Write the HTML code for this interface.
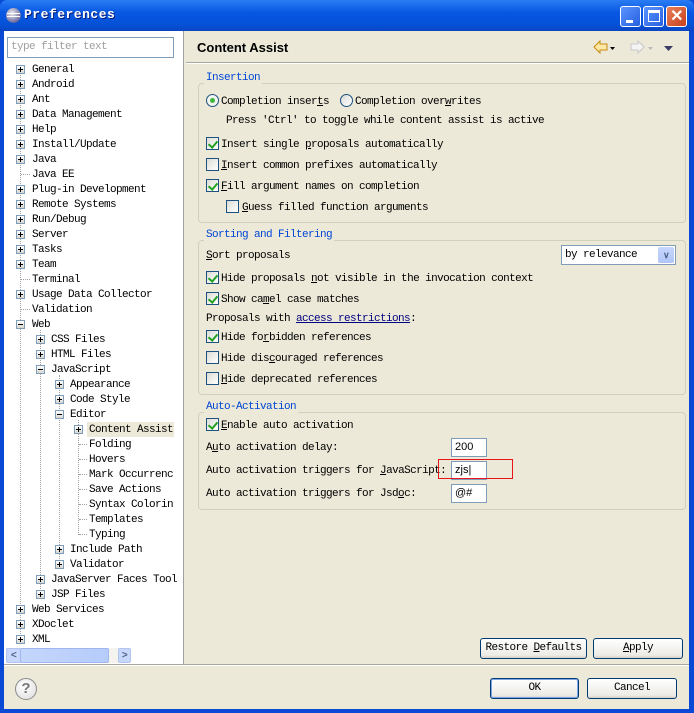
<!DOCTYPE html>
<html><head><meta charset="utf-8"><style>
*{margin:0;padding:0;box-sizing:border-box}
body{width:694px;height:713px;overflow:hidden;background:#0a49d6;font-family:"Liberation Mono",monospace;font-size:11px;letter-spacing:-0.6px;color:#000;position:relative}
.a{position:absolute;white-space:nowrap}
#title{left:0;top:0;width:694px;height:31px;background:linear-gradient(#2a7cf4,#0857e2 40%,#0552d8 80%,#0a45c0);border-radius:7px 7px 0 0}
#client{left:4px;top:31px;width:685px;height:678px;background:#ece9d8}
#tree{left:4px;top:31px;width:180px;height:633px;background:#fff;border-right:1px solid #a0a0a0}
.t{position:absolute;height:15px;line-height:15px;margin-top:1px}
.pb{position:absolute;width:9px;height:9px;border:1px solid #7f9db9;background:linear-gradient(#fff,#d8d8d0)}
.pb:before{content:"";position:absolute;left:1px;top:3px;width:5px;height:1px;background:#000}
.pb.p:after{content:"";position:absolute;left:3px;top:1px;width:1px;height:5px;background:#000}
.vl{position:absolute;border-left:1px dotted #a0a0a0;width:0}
.hl{position:absolute;border-top:1px dotted #a0a0a0;height:0}
.grp{position:absolute;border:1px solid #d0d0bf;border-radius:4px}
.gl{position:absolute;color:#0046d5;background:#ece9d8;padding:0 2px;line-height:13px;margin-top:1px}
.cb{position:absolute;width:13px;height:13px;border:1px solid #1c5180;background:linear-gradient(135deg,#dcdcd6,#fff)}
.cb.c:after{content:"";position:absolute;left:3px;top:1px;width:4px;height:7px;border:solid #21a121;border-width:0 2px 2px 0;transform:rotate(40deg)}
.in{position:absolute;background:#fff;border:1px solid #7f9db9;height:19px;line-height:17px;padding-left:3px;font-family:"Liberation Sans",sans-serif;font-size:11px;letter-spacing:0}
.btn{position:absolute;height:21px;border:1px solid #003c74;border-radius:3px;background:linear-gradient(#fff,#ecebe6 85%,#d6d0c5);text-align:center;line-height:19px}
u{text-decoration:underline}
</style></head><body>
<div id="title" class="a"></div>
<div class="a" style="left:6px;top:8px;width:15px;height:15px;border-radius:50%;background:radial-gradient(circle at 40% 35%,#eee,#6a6aa0 70%,#2a2a60)"></div>
<div class="a" style="left:7px;top:13px;width:13px;height:1px;background:#fff"></div>
<div class="a" style="left:7px;top:16px;width:13px;height:1px;background:#fff"></div>
<div class="a" style="left:24px;top:7px;color:#fff;font-weight:bold;font-size:13px;letter-spacing:0.5px;text-shadow:1px 1px #0a1e78">Preferences</div>
<div class="a" style="left:620px;top:6px;width:21px;height:21px;border:1px solid #fff;border-radius:3px;background:linear-gradient(135deg,#5a94ff,#2660e0)"><div style="position:absolute;left:5px;top:13px;width:7px;height:3px;background:#fff"></div></div>
<div class="a" style="left:643px;top:6px;width:21px;height:21px;border:1px solid #fff;border-radius:3px;background:linear-gradient(135deg,#5a94ff,#2660e0)"><div style="position:absolute;left:4px;top:3px;width:12px;height:12px;border:1px solid #fff;border-top-width:3px"></div></div>
<div class="a" style="left:666px;top:6px;width:21px;height:21px;border:1px solid #fff;border-radius:3px;background:linear-gradient(135deg,#e8805c,#c9401c);color:#fff;font:bold 16px 'Liberation Sans',sans-serif;text-align:center;line-height:19px">✕</div>
<div id="client" class="a"></div>
<div id="tree" class="a"></div>
<div class="a" style="left:7px;top:37px;width:167px;height:21px;border:1px solid #7f9db9;background:#fff;color:#a0a0a0;padding-left:3px;line-height:19px">type filter text</div>

<div class="vl" style="left:20px;top:70px;height:570px"></div>
<div class="vl" style="left:40px;top:330px;height:265px"></div>
<div class="vl" style="left:59px;top:375px;height:190px"></div>
<div class="vl" style="left:78px;top:420px;height:115px"></div>

<div class="pb p" style="left:16px;top:65px"></div><div class="t" style="left:32px;top:62px">General</div>
<div class="pb p" style="left:16px;top:80px"></div><div class="t" style="left:32px;top:77px">Android</div>
<div class="pb p" style="left:16px;top:95px"></div><div class="t" style="left:32px;top:92px">Ant</div>
<div class="pb p" style="left:16px;top:110px"></div><div class="t" style="left:32px;top:107px">Data Management</div>
<div class="pb p" style="left:16px;top:125px"></div><div class="t" style="left:32px;top:122px">Help</div>
<div class="pb p" style="left:16px;top:140px"></div><div class="t" style="left:32px;top:137px">Install/Update</div>
<div class="pb p" style="left:16px;top:155px"></div><div class="t" style="left:32px;top:152px">Java</div>
<div class="hl" style="left:21px;top:174px;width:9px"></div><div class="t" style="left:32px;top:167px">Java EE</div>
<div class="pb p" style="left:16px;top:185px"></div><div class="t" style="left:32px;top:182px">Plug-in Development</div>
<div class="pb p" style="left:16px;top:200px"></div><div class="t" style="left:32px;top:197px">Remote Systems</div>
<div class="pb p" style="left:16px;top:215px"></div><div class="t" style="left:32px;top:212px">Run/Debug</div>
<div class="pb p" style="left:16px;top:230px"></div><div class="t" style="left:32px;top:227px">Server</div>
<div class="pb p" style="left:16px;top:245px"></div><div class="t" style="left:32px;top:242px">Tasks</div>
<div class="pb p" style="left:16px;top:260px"></div><div class="t" style="left:32px;top:257px">Team</div>
<div class="hl" style="left:21px;top:279px;width:9px"></div><div class="t" style="left:32px;top:272px">Terminal</div>
<div class="pb p" style="left:16px;top:290px"></div><div class="t" style="left:32px;top:287px">Usage Data Collector</div>
<div class="hl" style="left:21px;top:309px;width:9px"></div><div class="t" style="left:32px;top:302px">Validation</div>
<div class="pb" style="left:16px;top:320px"></div><div class="t" style="left:32px;top:317px">Web</div>
<div class="pb p" style="left:36px;top:335px"></div><div class="t" style="left:51px;top:332px">CSS Files</div>
<div class="pb p" style="left:36px;top:350px"></div><div class="t" style="left:51px;top:347px">HTML Files</div>
<div class="pb" style="left:36px;top:365px"></div><div class="t" style="left:51px;top:362px">JavaScript</div>
<div class="pb p" style="left:55px;top:380px"></div><div class="t" style="left:70px;top:377px">Appearance</div>
<div class="pb p" style="left:55px;top:395px"></div><div class="t" style="left:70px;top:392px">Code Style</div>
<div class="pb" style="left:55px;top:410px"></div><div class="t" style="left:70px;top:407px">Editor</div>
<div class="a" style="left:87px;top:422px;width:87px;height:15px;background:#ece9d8"></div>
<div class="pb p" style="left:74px;top:425px"></div><div class="t" style="left:89px;top:422px">Content Assist</div>
<div class="hl" style="left:79px;top:444px;width:8px"></div><div class="t" style="left:89px;top:437px">Folding</div>
<div class="hl" style="left:79px;top:459px;width:8px"></div><div class="t" style="left:89px;top:452px">Hovers</div>
<div class="hl" style="left:79px;top:474px;width:8px"></div><div class="t" style="left:89px;top:467px">Mark Occurrenc</div>
<div class="hl" style="left:79px;top:489px;width:8px"></div><div class="t" style="left:89px;top:482px">Save Actions</div>
<div class="hl" style="left:79px;top:504px;width:8px"></div><div class="t" style="left:89px;top:497px">Syntax Colorin</div>
<div class="hl" style="left:79px;top:519px;width:8px"></div><div class="t" style="left:89px;top:512px">Templates</div>
<div class="hl" style="left:79px;top:534px;width:8px"></div><div class="t" style="left:89px;top:527px">Typing</div>
<div class="pb p" style="left:55px;top:545px"></div><div class="t" style="left:70px;top:542px">Include Path</div>
<div class="pb p" style="left:55px;top:560px"></div><div class="t" style="left:70px;top:557px">Validator</div>
<div class="pb p" style="left:36px;top:575px"></div><div class="t" style="left:51px;top:572px">JavaServer Faces Tool</div>
<div class="pb p" style="left:36px;top:590px"></div><div class="t" style="left:51px;top:587px">JSP Files</div>
<div class="pb p" style="left:16px;top:605px"></div><div class="t" style="left:32px;top:602px">Web Services</div>
<div class="pb p" style="left:16px;top:620px"></div><div class="t" style="left:32px;top:617px">XDoclet</div>
<div class="pb p" style="left:16px;top:635px"></div><div class="t" style="left:32px;top:632px">XML</div>

<div class="a" style="left:6px;top:648px;width:124px;height:15px;background:#f4f3ee"></div>
<div class="a" style="left:6px;top:648px;width:15px;height:15px;border:1px solid #b0c4f0;border-radius:2px;background:#c8d8fc;font:bold 10px 'Liberation Sans';text-align:center;line-height:13px;color:#4d6185">&lt;</div>
<div class="a" style="left:20px;top:648px;width:89px;height:15px;border:1px solid #9fb6f0;border-radius:2px;background:linear-gradient(90deg,#c4d6fc,#b6ccfa)"></div>
<div class="a" style="left:118px;top:648px;width:13px;height:15px;border:1px solid #b0c4f0;border-radius:2px;background:#c8d8fc;font:bold 10px 'Liberation Sans';text-align:center;line-height:13px;color:#4d6185">&gt;</div>

<div class="a" style="left:197px;top:40px;font:bold 13px 'Liberation Sans',sans-serif;letter-spacing:0">Content Assist</div>
<svg class="a" style="left:592px;top:39px" width="90" height="18">
<path d="M2 8 L8 2 V5 H15 V11 H8 V14 Z" fill="#fce9a8" stroke="#c88a10"/>
<path d="M18 8 h5 l-2.5 3z" fill="#000"/>
<path d="M52 8 L46 2 V5 H39 V11 H46 V14 Z" fill="#f4f4f4" stroke="#c8c8c8"/>
<path d="M56 8 h5 l-2.5 3z" fill="#bbb"/>
<path d="M72 7 h9 l-4.5 5z" fill="#3c3c64"/>
</svg>
<div class="a" style="left:186px;top:62px;width:503px;height:1px;background:#a8a89c"></div>
<div class="a" style="left:186px;top:63px;width:503px;height:1px;background:#fff"></div>

<div class="grp" style="left:198px;top:83px;width:488px;height:140px"></div>
<div class="gl" style="left:204px;top:71px">Insertion</div>
<div class="a" style="left:206px;top:94px;width:13px;height:13px;border-radius:50%;border:1px solid #1c5180;background:#f4f4f0"><div style="position:absolute;left:3px;top:3px;width:5px;height:5px;border-radius:50%;background:#3db83d"></div></div>
<div class="t" style="left:221px;top:94px">Completion inser<u>t</u>s</div>
<div class="a" style="left:340px;top:94px;width:13px;height:13px;border-radius:50%;border:1px solid #1c5180;background:linear-gradient(135deg,#dcdcd6,#fff)"></div>
<div class="t" style="left:355px;top:94px">Completion over<u>w</u>rites</div>
<div class="t" style="left:226px;top:113px">Press 'Ctrl' to toggle while content assist is active</div>
<div class="cb c" style="left:206px;top:137px"></div><div class="t" style="left:221px;top:137px">Insert single <u>p</u>roposals automatically</div>
<div class="cb" style="left:206px;top:158px"></div><div class="t" style="left:221px;top:158px"><u>I</u>nsert common prefixes automatically</div>
<div class="cb c" style="left:206px;top:179px"></div><div class="t" style="left:221px;top:179px"><u>F</u>ill argument names on completion</div>
<div class="cb" style="left:226px;top:200px"></div><div class="t" style="left:242px;top:200px"><u>G</u>uess filled function arguments</div>

<div class="grp" style="left:198px;top:240px;width:488px;height:155px"></div>
<div class="gl" style="left:204px;top:228px">Sorting and Filtering</div>
<div class="t" style="left:206px;top:248px"><u>S</u>ort proposals</div>
<div class="a" style="left:561px;top:245px;width:115px;height:20px;border:1px solid #7f9db9;background:#fff;padding-left:3px;line-height:18px">by relevance<div style="position:absolute;right:1px;top:1px;width:16px;height:16px;background:linear-gradient(#c6d6fc,#b0c6f8);border-radius:2px;color:#4d6185;text-align:center;font:bold 9px 'Liberation Sans';line-height:16px">&#8744;</div></div>
<div class="cb c" style="left:206px;top:271px"></div><div class="t" style="left:221px;top:271px">Hide proposals <u>n</u>ot visible in the invocation context</div>
<div class="cb c" style="left:206px;top:292px"></div><div class="t" style="left:221px;top:292px">Show ca<u>m</u>el case matches</div>
<div class="t" style="left:206px;top:311px">Proposals with <u style="color:#000080">access restrictions</u>:</div>
<div class="cb c" style="left:206px;top:330px"></div><div class="t" style="left:221px;top:330px">Hide fo<u>r</u>bidden references</div>
<div class="cb" style="left:206px;top:351px"></div><div class="t" style="left:221px;top:351px">Hide dis<u>c</u>ouraged references</div>
<div class="cb" style="left:206px;top:372px"></div><div class="t" style="left:221px;top:372px"><u>H</u>ide deprecated references</div>

<div class="grp" style="left:198px;top:412px;width:488px;height:98px"></div>
<div class="gl" style="left:204px;top:400px">Auto-Activation</div>
<div class="cb c" style="left:206px;top:418px"></div><div class="t" style="left:221px;top:418px"><u>E</u>nable auto activation</div>
<div class="t" style="left:206px;top:440px">A<u>u</u>to activation delay:</div>
<div class="in" style="left:451px;top:438px;width:36px">200</div>
<div class="t" style="left:206px;top:463px">Auto activation triggers for <u>J</u>avaScript:</div>
<div class="in" style="left:451px;top:461px;width:36px">zjs|</div>
<div class="a" style="left:438px;top:459px;width:75px;height:20px;border:1px solid #e8141a"></div>
<div class="t" style="left:206px;top:486px">Auto activation triggers for Jsd<u>o</u>c:</div>
<div class="in" style="left:451px;top:484px;width:36px">@#</div>

<div class="btn" style="left:480px;top:638px;width:107px">Restore <u>D</u>efaults</div>
<div class="btn" style="left:593px;top:638px;width:90px"><u>A</u>pply</div>
<div class="a" style="left:4px;top:664px;width:685px;height:1px;background:#a8a89c"></div>
<div class="a" style="left:4px;top:665px;width:685px;height:1px;background:#fff"></div>
<div class="a" style="left:15px;top:678px;width:22px;height:22px;border-radius:50%;border:1px solid #8a8a8a;background:radial-gradient(circle at 40% 35%,#fff,#dcdcdc);color:#777;font:bold 15px 'Liberation Sans',sans-serif;text-align:center;line-height:20px;letter-spacing:0">?</div>
<div class="btn" style="left:490px;top:678px;width:89px;box-shadow:inset 0 0 0 1px #7fa5e8">OK</div>
<div class="btn" style="left:587px;top:678px;width:90px">Cancel</div>
</body></html>
